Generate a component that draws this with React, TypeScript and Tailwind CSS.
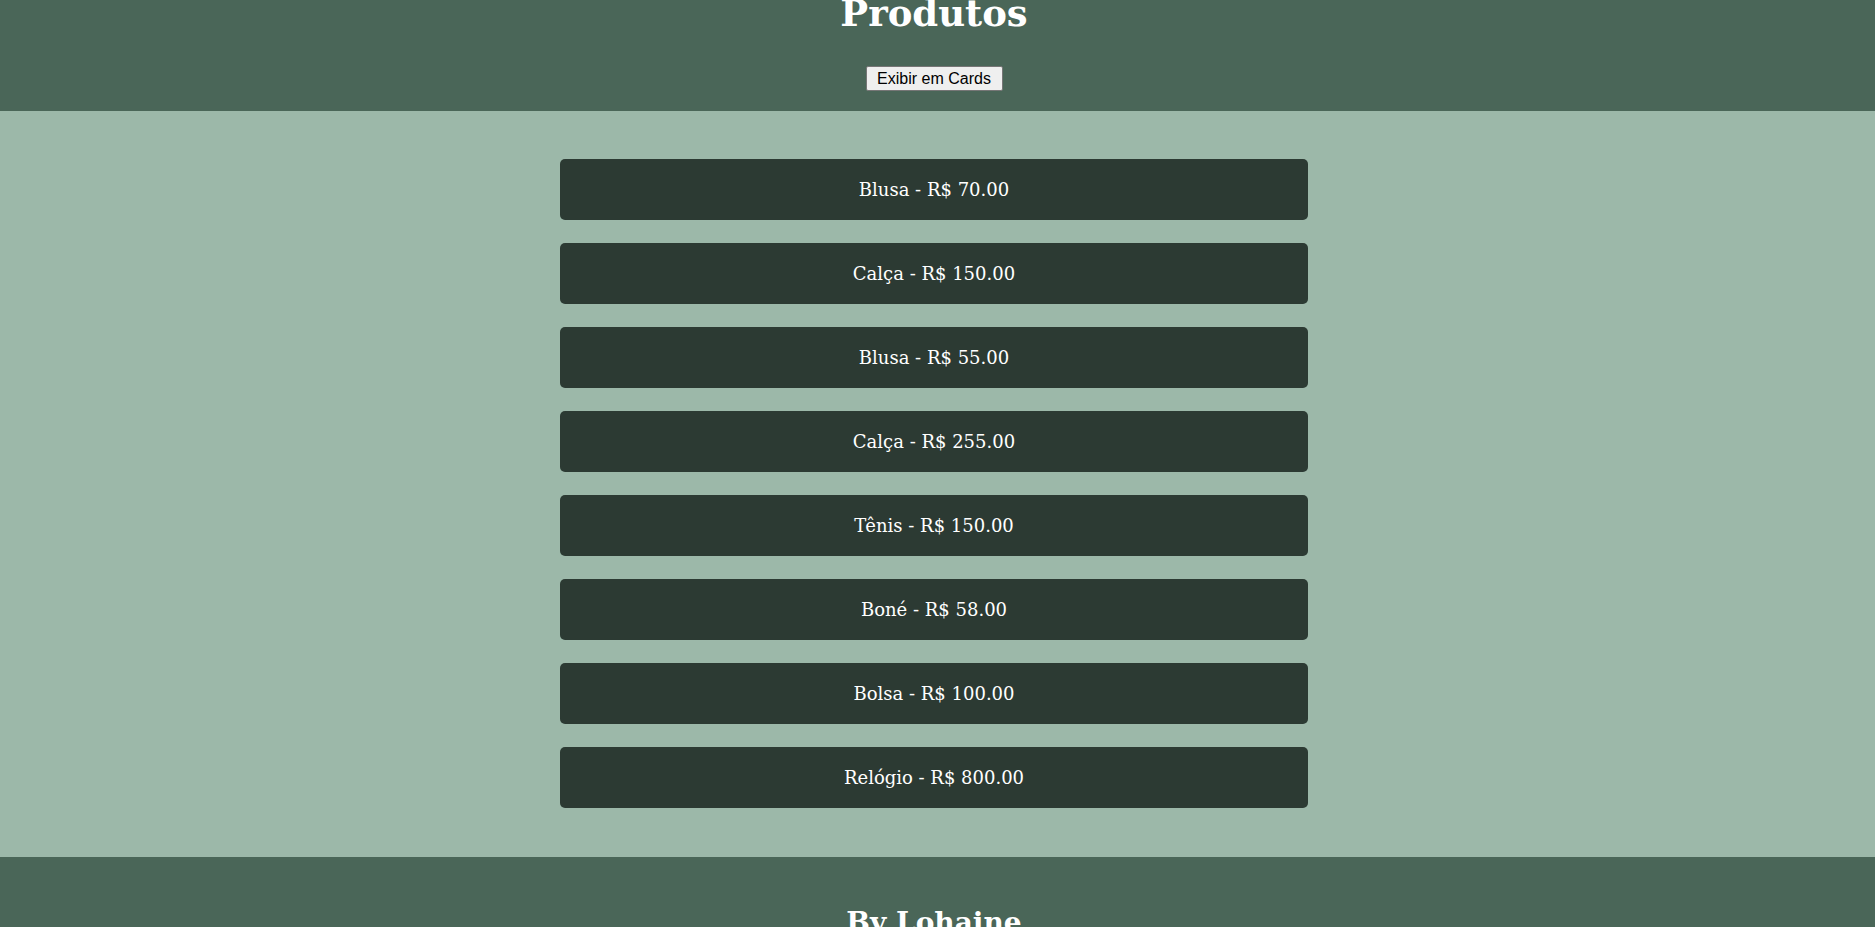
import React from "react";

const items = [
  "Blusa - R$ 70.00",
  "Calça - R$ 150.00",
  "Blusa - R$ 55.00",
  "Calça - R$ 255.00",
  "Tênis - R$ 150.00",
  "Boné - R$ 58.00",
  "Bolsa - R$ 100.00",
  "Relógio - R$ 800.00",
];

export default function App() {
  return (
    <div className="min-h-screen bg-[#9cb8a9]" style={{ fontFamily: "'DejaVu Serif', Georgia, serif" }}>
      <header className="h-[111px] bg-[#4a6658] flex flex-col items-center overflow-hidden pr-[7px]">
        <h1 className="mt-[-9px] text-[37px] leading-[44px] font-bold text-white">Produtos</h1>
        <button
          className="mt-[31px] h-[25px] w-[137px] bg-[#efefef] border border-[#767676] rounded-[2px] text-black text-[16px] leading-none px-[6px]"
          style={{ fontFamily: "'Liberation Sans', Arial, sans-serif" }}
        >
          Exibir em Cards
        </button>
      </header>
      <main className="flex flex-col items-center gap-[23px] pt-[48px] pb-[49px] pr-[7px]">
        {items.map((t, i) => (
          <div
            key={i}
            className="w-[748px] h-[61px] rounded-[5px] bg-[#2c3a33] flex items-center justify-center text-white text-[18px]"
          >
            {t}
          </div>
        ))}
      </main>
      <footer className="bg-[#4a6658] h-[120px] flex justify-center pr-[7px]">
        <h2 className="mt-[46px] text-[28px] font-bold text-white leading-[40px]">By Lohaine</h2>
      </footer>
    </div>
  );
}
